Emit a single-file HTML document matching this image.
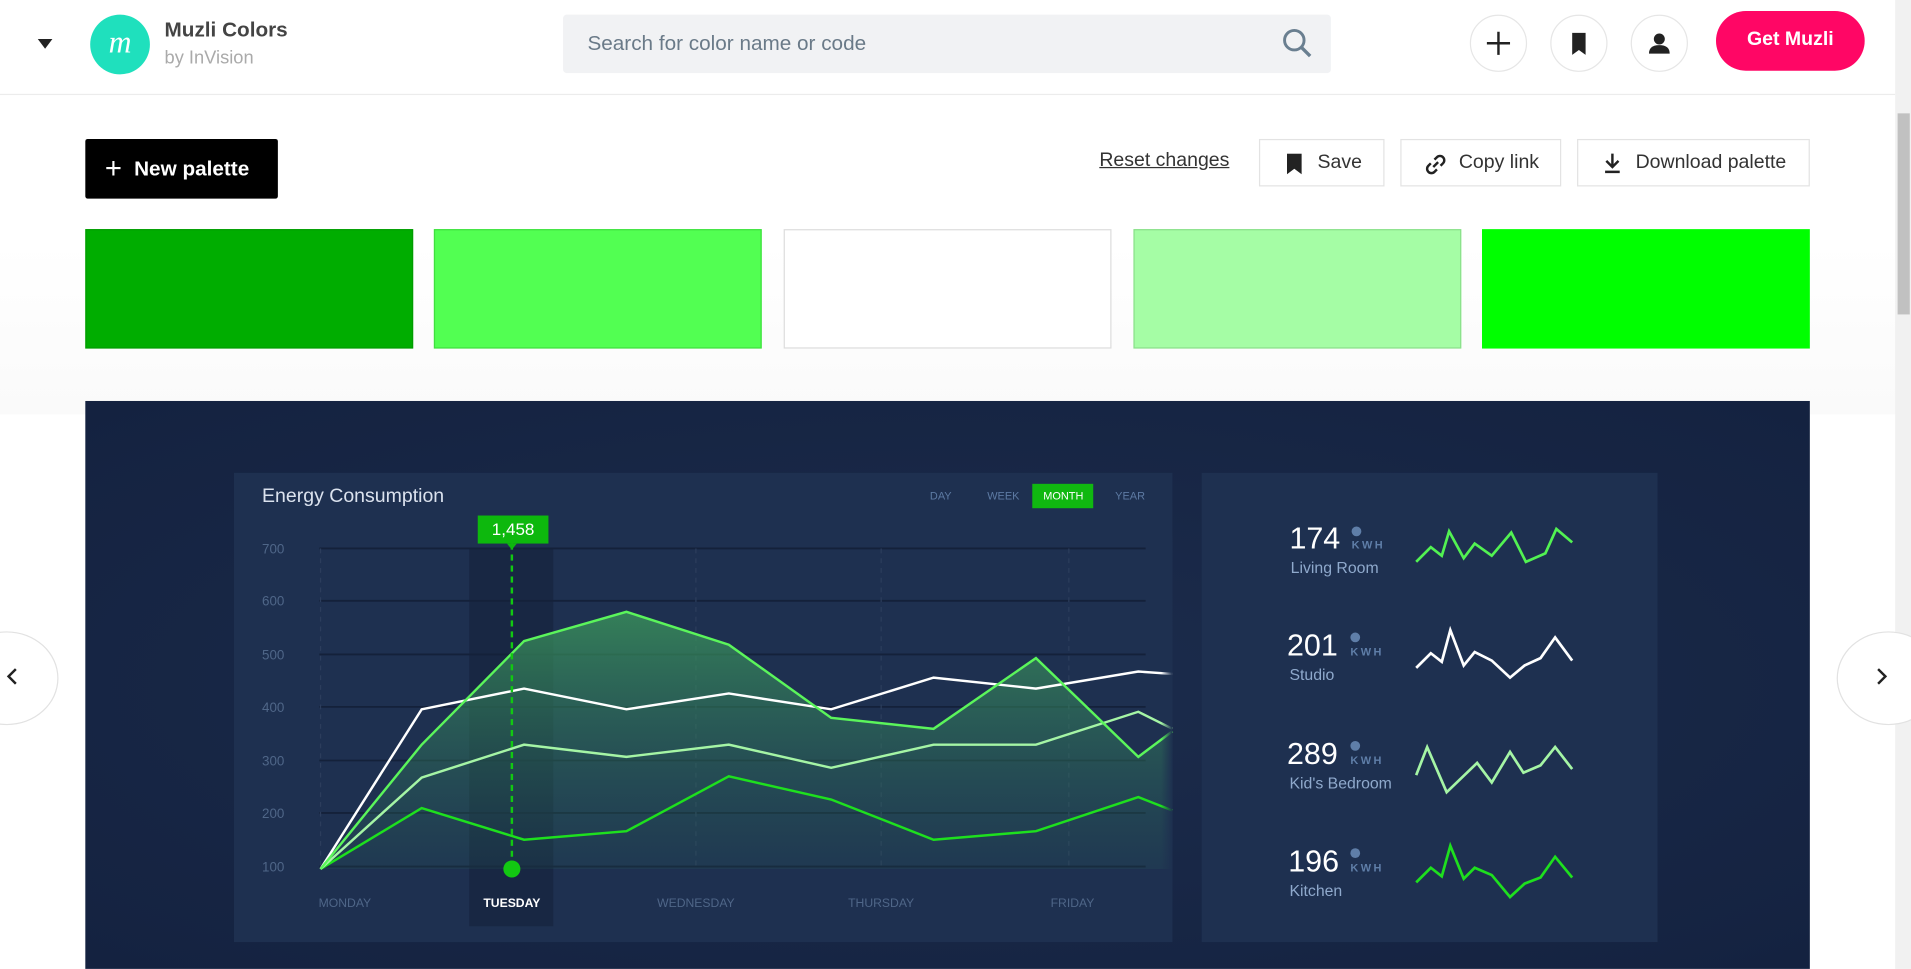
<!DOCTYPE html>
<html><head><meta charset="utf-8"><style>
html,body{margin:0;padding:0;width:1911px;height:969px;overflow:hidden;background:#fff;font-family:"Liberation Sans",sans-serif}
#w{position:absolute;left:0;top:0;width:1568px;height:795px;transform:scale(1.21875);transform-origin:0 0}
.a{position:absolute}
.cb{position:absolute;top:12px;width:47px;height:47px;border:1px solid #e6e6e6;border-radius:50%;box-sizing:border-box;background:#fff}
.btn{position:absolute;top:114px;height:39px;border:1px solid #e3e3e3;box-sizing:border-box;font-size:16px;color:#333;line-height:37px}
.sw{position:absolute;top:188px;width:269px;height:98px;box-sizing:border-box}
</style></head><body><div id="w">
<div class="a" style="left:0;top:200px;width:1555px;height:140px;background:linear-gradient(#fff,#fafafa)"></div>
<div class="a" style="left:0;top:0;width:1555px;height:77px;border-bottom:1px solid #ececec;background:#fff"></div>
<div class="a" style="left:31px;top:32px;width:0;height:0;border-left:6px solid transparent;border-right:6px solid transparent;border-top:8px solid #222"></div>
<div class="a" style="left:74px;top:12px;width:49px;height:49px;border-radius:50%;background:#1fe0bd;color:#fff;font:italic 26px 'Liberation Serif',serif;text-align:center;line-height:46px">m</div>
<div class="a" style="left:135px;top:15px;font-size:17px;font-weight:bold;color:#444">Muzli Colors</div>
<div class="a" style="left:135px;top:39px;font-size:15px;color:#aaa">by InVision</div>
<div class="a" style="left:462px;top:12px;width:630px;height:48px;background:#f1f2f4;border-radius:3px"></div>
<div class="a" style="left:482px;top:26px;font-size:17px;color:#6a7a88">Search for color name or code</div>
<svg class="a" style="left:1050px;top:22px" width="28" height="28"><circle cx="12" cy="11" r="8" fill="none" stroke="#6a7f90" stroke-width="2.4"/><path d="M18 17l7 7" stroke="#6a7f90" stroke-width="2.8"/></svg>
<div class="cb" style="left:1206px"><svg width="45" height="45"><path d="M22.5 13v19M13 22.5h19" stroke="#222" stroke-width="2"/></svg></div>
<div class="cb" style="left:1272px"><svg width="45" height="45"><path d="M17 14h11v18l-5.5-4-5.5 4z" fill="#222"/></svg></div>
<div class="cb" style="left:1338px"><svg width="45" height="45"><circle cx="22.5" cy="19" r="4.5" fill="#222"/><path d="M14 31q0-7 8.5-7t8.5 7z" fill="#222"/></svg></div>
<div class="a" style="left:1408px;top:9px;width:122px;height:49px;border-radius:25px;background:#ff0665;color:#fff;font-size:16px;font-weight:bold;text-align:center;line-height:48px">Get Muzli</div>
<div class="a" style="left:1555px;top:0;width:13px;height:795px;background:#f1f1f1"></div>
<div class="a" style="left:1557px;top:93px;width:10px;height:165px;background:#c1c1c1"></div>
<div class="a" style="left:70px;top:114px;width:158px;height:49px;background:#000;border-radius:2px;color:#fff;font-size:17px;font-weight:bold;line-height:49px"><span style="font-size:24px;font-weight:normal;margin:0 10px 0 16px;vertical-align:-2px">+</span>New palette</div>
<div class="a" style="left:902px;top:123px;font-size:16px;color:#333;text-decoration:underline">Reset changes</div>
<div class="btn" style="left:1033px;width:103px;padding-left:47px"><svg class="a" style="left:21px;top:11px" width="14" height="18"><path d="M1 0h12v17l-6-4.5-6 4.5z" fill="#222"/></svg>Save</div>
<div class="btn" style="left:1149px;width:132px;padding-left:47px"><svg class="a" style="left:18px;top:10px" width="20" height="20"><g fill="none" stroke="#222" stroke-width="2"><path d="M8 12l4-4"/><path d="M9 6l2-2a3.5 3.5 0 0 1 5 5l-2 2"/><path d="M11 14l-2 2a3.5 3.5 0 0 1-5-5l2-2"/></g></svg>Copy link</div>
<div class="btn" style="left:1294px;width:191px;padding-left:47px"><svg class="a" style="left:20px;top:10px" width="16" height="18"><path d="M8 1v10M3 7l5 5 5-5" stroke="#222" stroke-width="2" fill="none"/><path d="M2 16h12" stroke="#222" stroke-width="2"/></svg>Download palette</div>
<div class="sw" style="left:70px;background:#00ad00;border:1px solid #009d00"></div>
<div class="sw" style="left:356px;background:#52ff52;border:1px solid #3fe03f"></div>
<div class="sw" style="left:643px;background:#fff;border:1px solid #ddd"></div>
<div class="sw" style="left:930px;background:#a5fda5;border:1px solid #8be08b"></div>
<div class="sw" style="left:1216px;background:#00ff00"></div>
<div class="a" style="left:70px;top:329px;width:1415px;height:466px;background:radial-gradient(ellipse at 50% 50%,#1c2c4c,#142240)"></div>
<div class="a" style="left:-37px;top:518px;width:83px;height:75px;border-radius:50%;border:1px solid #e2e2e2;background:#fff"></div>
<svg class="a" style="left:4px;top:548px" width="12" height="14"><path d="M9 1L3 7l6 6" stroke="#222" stroke-width="2" fill="none"/></svg>
<div class="a" style="left:1507px;top:518px;width:83px;height:75px;border-radius:50%;border:1px solid #e2e2e2;background:#fff"></div>
<svg class="a" style="left:1538px;top:548px" width="12" height="14"><path d="M3 1l6 6-6 6" stroke="#222" stroke-width="2" fill="none"/></svg>
<svg class="a" style="left:0;top:0" width="1555" height="795" font-family="Liberation Sans,sans-serif">
<defs><linearGradient id="g" x1="0" y1="0" x2="0" y2="1"><stop offset="0" stop-color="#3c9a5c" stop-opacity=".75"/><stop offset="1" stop-color="#2a6a5a" stop-opacity=".15"/></linearGradient>
<linearGradient id="h" x1="0" x2="1"><stop offset=".85" stop-color="#1e3050" stop-opacity="0"/><stop offset="1" stop-color="#1e3050"/></linearGradient></defs>
<rect x="192" y="388" width="770" height="385" fill="#1e3050"/>
<rect x="986" y="388" width="374" height="385" fill="#1e3050"/>
<text x="215" y="412" fill="#dbe2ee" font-size="16">Energy Consumption</text>
<g font-size="9" fill="#5d7aa3"><text x="763" y="410">DAY</text><text x="810" y="410">WEEK</text><text x="915" y="410">YEAR</text></g>
<rect x="847" y="397" width="50" height="20" fill="#10b810"/><text x="856" y="410" font-size="9" fill="#fff">MONTH</text>
<rect x="385" y="450" width="69" height="310" fill="#172640" opacity=".8"/>
<g stroke="#14213a" stroke-width="1.5"><path d="M262 450H940M262 493H940M262 537H940M262 580H940M262 624H940M262 667H940M262 711H940"/></g>
<g stroke="#2c3d5c" stroke-dasharray="4 4"><path d="M263 450V713M571 450V713M723 450V713M877 450V713"/></g>
<g font-size="11" fill="#4f6688"><text x="215" y="454">700</text><text x="215" y="497">600</text><text x="215" y="541">500</text><text x="215" y="584">400</text><text x="215" y="628">300</text><text x="215" y="671">200</text><text x="215" y="715">100</text></g>
<path d="M263 713L346 611L430 526L514 502L598 529L682 589L766 598L850 540L934 621L962 600V713H263Z" fill="url(#g)"/>
<g fill="none" stroke-width="2">
<polyline points="263,713 346,663 430,689 514,682 598,637 682,656 766,689 850,682 934,654 962,665" stroke="#1ee01e"/>
<polyline points="263,713 346,638 430,611 514,621 598,611 682,630 766,611 850,611 934,584 962,598" stroke="#a5f5a5"/>
<polyline points="263,713 346,582 430,565 514,582 598,569 682,582 766,556 850,565 934,551 962,553" stroke="#fff"/>
<polyline points="263,713 346,611 430,526 514,502 598,529 682,589 766,598 850,540 934,621 962,600" stroke="#5bf55b"/>
</g>
<rect x="900" y="440" width="62" height="300" fill="url(#h)"/>
<path d="M420 446V713" stroke="#12c812" stroke-width="2" stroke-dasharray="5 4"/>
<circle cx="420" cy="713" r="7" fill="#12c812"/>
<rect x="392" y="423" width="58" height="23" fill="#0db80d"/><path d="M416 446h8l-4 5z" fill="#0db80d"/>
<text x="421" y="439" text-anchor="middle" fill="#fff" font-size="14">1,458</text>
<g font-size="10" fill="#4f6688" text-anchor="middle"><text x="283" y="744">MONDAY</text><text x="571" y="744">WEDNESDAY</text><text x="723" y="744">THURSDAY</text><text x="880" y="744">FRIDAY</text></g>
<text x="420" y="744" font-size="10" fill="#fff" font-weight="bold" text-anchor="middle">TUESDAY</text>
<g fill="#fff" font-size="25"><text x="1058" y="450">174</text><text x="1056" y="538">201</text><text x="1056" y="627">289</text><text x="1057" y="715">196</text></g>
<g fill="#5f7ea8" font-size="9" font-weight="bold" letter-spacing="2"><text x="1109" y="450">KWH</text><text x="1108" y="538">KWH</text><text x="1108" y="627">KWH</text><text x="1108" y="715">KWH</text></g>
<g fill="#5f7ea8"><circle cx="1113" cy="436" r="4"/><circle cx="1112" cy="523" r="4"/><circle cx="1112" cy="612" r="4"/><circle cx="1112" cy="700" r="4"/></g>
<g fill="#8fa9cc" font-size="13"><text x="1059" y="470">Living Room</text><text x="1058" y="558">Studio</text><text x="1058" y="647">Kid's Bedroom</text><text x="1058" y="735">Kitchen</text></g>
<g fill="none" stroke-width="2.2">
<polyline stroke="#52f252" points="1162,461 1174,449 1183,456 1189,436 1201,458 1210,446 1224,456 1240,437 1252,461 1268,454 1277,434 1290,445"/>
<polyline stroke="#fff" points="1162,548 1174,536 1183,543 1190,517 1201,546 1210,535 1224,542 1239,556 1251,546 1264,540 1276,523 1290,542"/>
<polyline stroke="#a5f5a5" points="1162,636 1171,613 1187,650 1212,626 1224,642 1239,617 1250,634 1264,628 1276,613 1290,631"/>
<polyline stroke="#1ee01e" points="1162,724 1174,712 1183,719 1190,694 1201,721 1210,712 1224,718 1239,736 1251,725 1264,720 1276,703 1290,720"/>
</g>
</svg>
</div></body></html>
